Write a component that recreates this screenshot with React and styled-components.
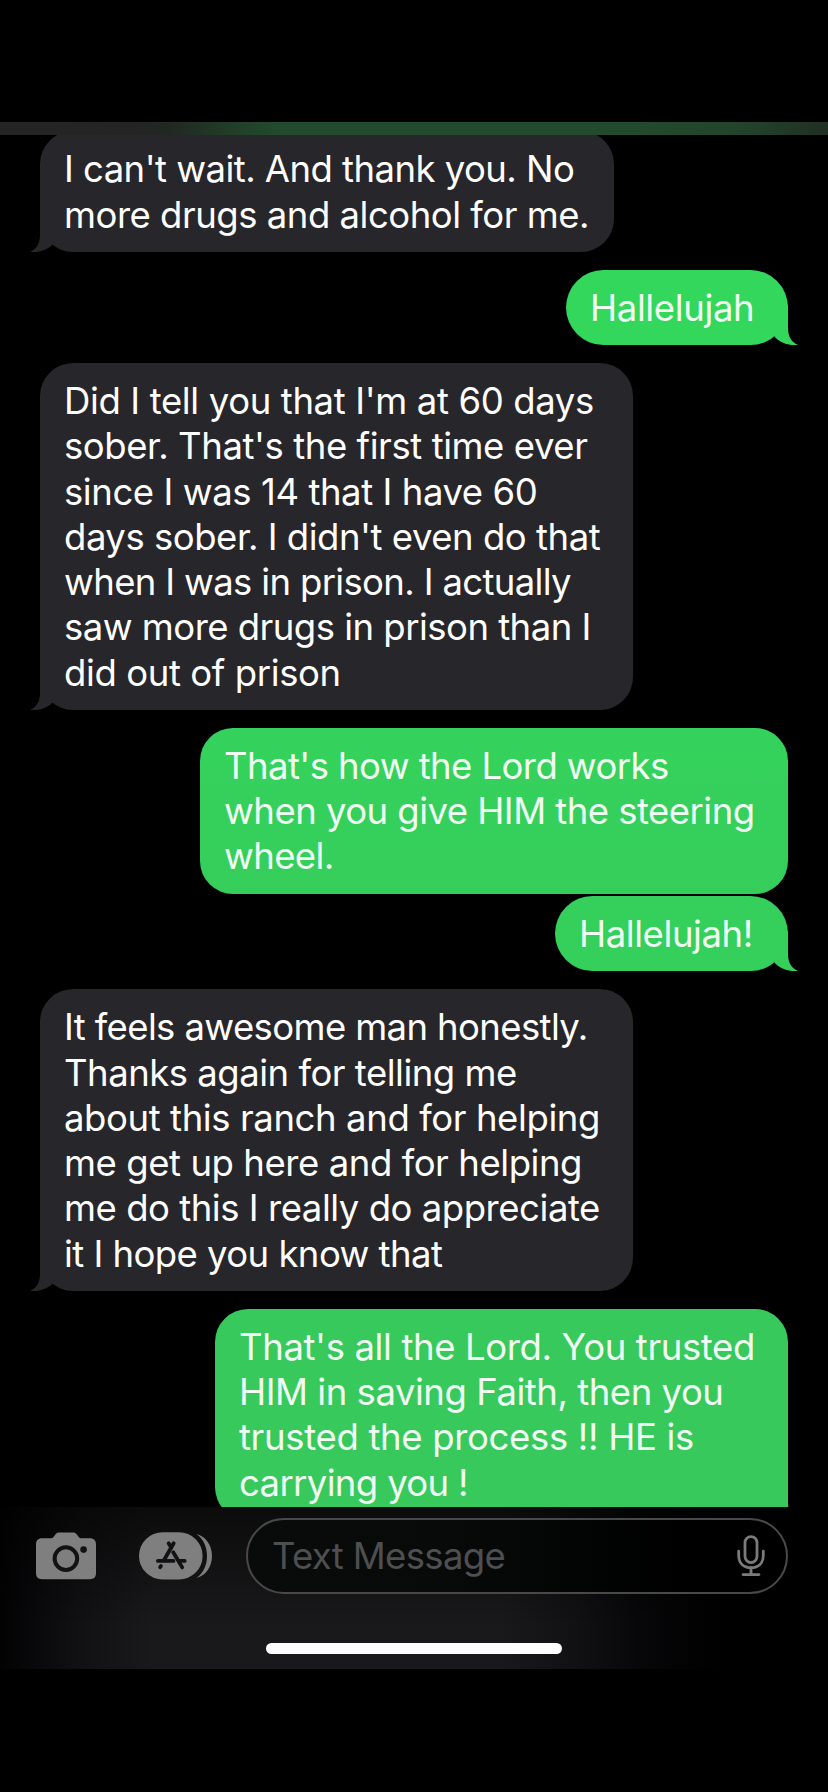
import React from "react";
import styled, { createGlobalStyle, css } from "styled-components";

const GlobalStyle = createGlobalStyle`
  * { box-sizing: border-box; }
  html, body { margin: 0; background: #000; }
`;

const Screen = styled.main`
  display: flex;
  flex-direction: column;
  width: 828px;
  height: 1792px;
  padding-top: 122px;
  overflow: hidden;
  background: #000;
  font-family: Inter, "Liberation Sans", sans-serif;
  font-size: 36.5px;
`;

const HeaderEdge = styled.header`
  flex: none;
  height: 12.6px;
  background: linear-gradient(
    90deg,
    #252525 0,
    #242424 135px,
    #212822 170px,
    #213a27 220px,
    #224a2c 275px,
    #224a2c 640px,
    #22442b 740px,
    #212f24 828px
  );
`;

const Thread = styled.section`
  flex: none;
  display: flex;
  flex-direction: column;
  height: 1372.7px;
  padding: 0 40px;
  overflow: hidden;
`;

const received = css`
  align-self: flex-start;
  background: #27262b;
`;

const sent = css`
  align-self: flex-end;
  background: ${(p) => p.$tone};
`;

const Bubble = styled.article`
  position: relative;
  flex: none;
  width: ${(p) => p.$width}px;
  margin-top: ${(p) => p.$gap}px;
  padding: 16px 0 14.2px 24px;
  border-radius: ${(p) => (p.$single ? 37.7 : 33)}px;
  color: ${(p) => (p.$sent ? "#f0fdf3" : "#ffffff")};
  ${(p) => (p.$sent ? sent : received)}
`;

const Line = styled.span`
  display: block;
  height: 45.28px;
  line-height: 45.28px;
  white-space: pre;
  letter-spacing: ${(p) => p.$track}px;
`;

const TailShape = styled.svg`
  position: absolute;
  bottom: 0;
  ${(p) => (p.$sent ? "right: -10px; transform: scaleX(-1);" : "left: -10px;")}
  width: 30px;
  height: 40px;
  fill: ${(p) => p.$tone};
`;

const Composer = styled.footer`
  flex: none;
  display: flex;
  flex-direction: column;
  height: 161.7px;
  background:
    linear-gradient(180deg, rgba(0, 0, 0, 0.55) 0, rgba(0, 0, 0, 0) 75%),
    linear-gradient(
      90deg,
      #020202 0,
      #08080a 30px,
      #111113 80px,
      #19191b 150px,
      #19191b 500px,
      #111113 575px,
      #070709 640px,
      #000 720px
    );
`;

const Controls = styled.div`
  display: flex;
  align-items: center;
  height: 76px;
  margin: 11px 40px 0 36px;
`;

const IconButton = styled.button`
  display: flex;
  padding: 0;
  border: 0;
  background: none;
  margin-right: ${(p) => p.$after}px;
`;

const MessageField = styled.div`
  flex: 1;
  display: flex;
  align-items: center;
  justify-content: space-between;
  height: 76px;
  padding: 0 21px 0 24px;
  border: 2px solid #484a4a;
  border-radius: 38px;
  background: linear-gradient(90deg, #080b09 0, #070a08 200px, #020503 330px, #000 430px);
`;

const Placeholder = styled.span`
  color: #4e4f50;
  letter-spacing: -0.65px;
  white-space: pre;
`;

const HomeIndicator = styled.div`
  width: 296px;
  height: 11px;
  margin: 48.7px 0 0 266px;
  border-radius: 6px;
  background: #fff;
`;

function Tail({ sent: isSent, tone }) {
  return (
    <TailShape $sent={isSent} $tone={tone} viewBox="0 0 30 40">
      <path d="M10 0V23C10 31.5 6.5 37.4 0 39.8C9 40.8 17 38 22.7 32.4L30 22V0Z" />
    </TailShape>
  );
}

function CameraIcon() {
  return (
    <svg width="60" height="48" viewBox="0 0 60 48">
      <path
        fill="#7f7f80"
        d="M6 6.3H14.5C16 6.3 17 5.7 18 4.4L19.5 2.2C20.5 .9 21.5 .4 23.2 .4H37C38.7 .4 39.7 .9 40.7 2.2L42.3 4.4C43.3 5.7 44.2 6.3 45.8 6.3H54C57.8 6.3 60 8.5 60 12.3V41.3C60 45.1 57.8 47.2 54 47.2H6C2.2 47.2 0 45.1 0 41.3V12.3C0 8.5 2.2 6.3 6 6.3Z"
      />
      <circle cx="29.9" cy="26.6" r="11.3" fill="none" stroke="#121214" strokeWidth="4" />
      <circle cx="47.6" cy="17.6" r="3.3" fill="#121214" />
    </svg>
  );
}

function AppStoreIcon() {
  return (
    <svg width="73" height="48" viewBox="0 0 73 48">
      <path fill="#7f7f80" d="M57.5 2C67 4.5 73 13.5 73 24S67 43.5 57.5 46C64.5 41 68 33 68 24S64.5 7 57.5 2Z" />
      <rect x="0" y=".3" width="63.6" height="47.2" rx="23.6" fill="#7f7f80" />
      <g stroke="#121214" strokeWidth="3.8" strokeLinecap="round" fill="none">
        <path d="M29.6 11.3L32.2 15.5" />
        <path d="M34.7 11.3L25.2 27.8" />
        <path d="M18.9 28.9H34.5" />
        <path d="M21.9 34.1L21.1 35.2" />
        <path d="M34.2 20.3L43.2 35.4" />
        <path d="M40.6 28.9H45.7" />
      </g>
    </svg>
  );
}

function MicIcon() {
  return (
    <svg width="28" height="42" viewBox="0 0 28 42">
      <g fill="none" stroke="#7b7b7c" strokeWidth="2.8" strokeLinecap="round">
        <rect x="8" y="1.6" width="12" height="26" rx="6" />
        <path d="M1.7 16.2V20.5C1.7 28.2 6.5 32.7 14 32.7S26.3 28.2 26.3 20.5V16.2" />
        <path d="M14 33V39.3M6 39.6H22" />
      </g>
    </svg>
  );
}

const GREY = "#27262b";

const messages = [
  {
    width: 574, gap: -3.2, tail: true,
    lines: [["I can't wait. And thank you. No", -0.54], ["more drugs and alcohol for me.", -0.484]],
  },
  { sent: true, width: 222, gap: 17.4, tail: true, tone: "#33d75b", lines: [["Hallelujah", -0.371]] },
  {
    width: 592.7, gap: 18, tail: true,
    lines: [
      ["Did I tell you that I'm at 60 days", -0.36],
      ["sober. That's the first time ever", -0.42],
      ["since I was 14 that I have 60", -0.42],
      ["days sober. I didn't even do that", -0.47],
      ["when I was in prison. I actually", -0.661],
      ["saw more drugs in prison than I", -0.52],
      ["did out of prison", -0.393],
    ],
  },
  {
    sent: true, width: 588, gap: 17.8, tone: "linear-gradient(#34d25c, #36ce5b)",
    lines: [
      ["That's how the Lord works", -0.574],
      ["when you give HIM the steering", -0.529],
      ["wheel.", -0.63],
    ],
  },
  { sent: true, width: 233, gap: 2.1, tail: true, tone: "#35cf5b", lines: [["Hallelujah!", -0.422]] },
  {
    width: 592.7, gap: 17.9, tail: true,
    lines: [
      ["It feels awesome man honestly.", -0.61],
      ["Thanks again for telling me", -0.489],
      ["about this ranch and for helping", -0.4],
      ["me get up here and for helping", -0.43],
      ["me do this I really do appreciate", -0.46],
      ["it I hope you know that", -0.545],
    ],
  },
  {
    sent: true, width: 573, gap: 17.8, tail: true, tone: "#37c95b",
    lines: [
      ["That's all the Lord. You trusted", -0.37],
      ["HIM in saving Faith, then you", -0.46],
      ["trusted the process !! HE is", -0.326],
      ["carrying you !", -0.64],
    ],
  },
];

export default function App() {
  return (
    <Screen>
      <GlobalStyle />
      <HeaderEdge />
      <Thread>
        {messages.map((m, i) => (
          <Bubble
            key={i}
            $sent={m.sent}
            $tone={m.tone}
            $width={m.width}
            $gap={m.gap}
            $single={m.lines.length === 1}
          >
            {m.tail && <Tail sent={m.sent} tone={m.tone || GREY} />}
            {m.lines.map(([text, track]) => (
              <Line key={text} $track={track}>{text}</Line>
            ))}
          </Bubble>
        ))}
      </Thread>
      <Composer>
        <Controls>
          <IconButton aria-label="Camera" $after={43}><CameraIcon /></IconButton>
          <IconButton aria-label="Apps" $after={34}><AppStoreIcon /></IconButton>
          <MessageField>
            <Placeholder>Text Message</Placeholder>
            <MicIcon />
          </MessageField>
        </Controls>
        <HomeIndicator />
      </Composer>
    </Screen>
  );
}
